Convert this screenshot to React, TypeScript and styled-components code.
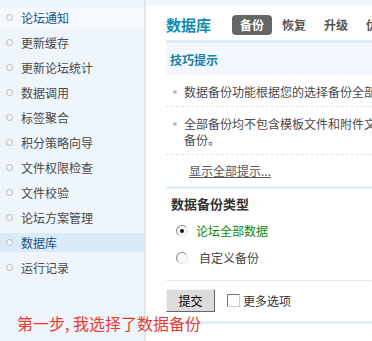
import React from "react";
import styled, { createGlobalStyle } from "styled-components";

const GlobalStyle = createGlobalStyle`
  html, body {
    margin: 0;
    padding: 0;
    background: #ffffff;
  }
  body {
    font-family: "Noto Sans CJK SC", "Noto Sans", sans-serif;
    font-size: 12px;
    color: #333;
  }
  ul {
    list-style: none;
    margin: 0;
    padding: 0;
  }
`;

const menu = [
  "论坛通知",
  "更新缓存",
  "更新论坛统计",
  "数据调用",
  "标签聚合",
  "积分策略向导",
  "文件权限检查",
  "文件校验",
  "论坛方案管理",
  "数据库",
  "运行记录",
];

const tabs = ["备份", "恢复", "升级", "优化"];

export default function App() {
  return (
    <>
      <GlobalStyle />
      <Page>
        <Sidebar>
          {menu.map((item, i) => (
            <MenuItem key={item} $active={i === 9} $soft={i === 0}>
              <Bullet />
              <MenuText $blue={i === 0 || i === 9}>{item}</MenuText>
            </MenuItem>
          ))}
        </Sidebar>

        <Main>
          <TitleRow>
            <Title>数据库</Title>
            <Tabs>
              {tabs.map((t, i) => (
                <Tab key={t} $current={i === 0}>
                  {t}
                </Tab>
              ))}
            </Tabs>
          </TitleRow>

          <TipsBox>
            <TipsHeader>技巧提示</TipsHeader>
            <TipList>
              <TipItem>
                <Dot />
                <TipText>
                  数据备份功能根据您的选择备份全部Discuz!论坛帖子和设置数据，导出的数据文件可用“数据恢复”功能或
                  phpMyAdmin 导入。
                </TipText>
              </TipItem>
              <TipItem>
                <Dot />
                <TipText>
                  全部备份均不包含模板文件和附件文件。模板、附件的备份只需通过 FTP 等下载 templates/、attachments/
                  目录即可，Discuz! 不提供单独
                  <br />
                  备份。
                </TipText>
              </TipItem>
              <MoreTips>
                <MoreLink href="#">显示全部提示...</MoreLink>
              </MoreTips>
            </TipList>
          </TipsBox>

          <Section>
            <SectionTitle>数据备份类型</SectionTitle>
            <RadioRow>
              <Radio $checked />
              <RadioLabel $green>论坛全部数据</RadioLabel>
            </RadioRow>
            <RadioRow>
              <Radio />
              <RadioLabel>自定义备份</RadioLabel>
            </RadioRow>
          </Section>

          <SubmitRow>
            <SubmitButton>提交</SubmitButton>
            <CheckLabel>
              <CheckBox />
              更多选项
            </CheckLabel>
          </SubmitRow>

          <NextBar />
        </Main>

        <Note>第一步, 我选择了数据备份</Note>
      </Page>
    </>
  );
}

const Page = styled.div`
  position: relative;
  display: flex;
  width: 372px;
  height: 341px;
  overflow: hidden;
`;

const Sidebar = styled.ul`
  flex: 0 0 146px;
  display: flex;
  flex-direction: column;
  gap: 6px;
  padding-top: 8px !important;
  background-color: #eef5fb;
  border-right: 2px solid #dde9f3;
  box-sizing: border-box;
`;

const MenuItem = styled.li<{ $active?: boolean; $soft?: boolean }>`
  display: flex;
  align-items: center;
  gap: 8px;
  height: 19px;
  padding-left: 6px;
  background-color: ${(p) => (p.$active ? "#dbeaf7" : p.$soft ? "#f4f9fd" : "transparent")};
`;

const Bullet = styled.span`
  width: 5px;
  height: 5px;
  border: 1px solid #b4b9be;
  border-radius: 50%;
  background: #f4f7fa;
`;

const MenuText = styled.span<{ $blue?: boolean }>`
  font-size: 12px;
  color: ${(p) => (p.$blue ? "#1c5283" : "#4a4a4a")};
  white-space: nowrap;
`;

const Main = styled.div`
  flex: 0 0 560px;
  padding-left: 20px;
  border-top: 5px solid #f4f7fa;
  box-sizing: border-box;
`;

const TitleRow = styled.div`
  display: flex;
  align-items: center;
  height: 20px;
  margin-top: 10px;
`;

const Title = styled.h1`
  margin: 0 21px 0 0;
  font-size: 15px;
  font-weight: 700;
  color: #118bb6;
  line-height: 20px;
`;

const Tabs = styled.div`
  display: flex;
  gap: 2px;
`;

const Tab = styled.span<{ $current?: boolean }>`
  width: 40px;
  height: 20px;
  line-height: 20px;
  text-align: center;
  font-weight: 700;
  font-size: 12px;
  border-radius: 4px;
  color: ${(p) => (p.$current ? "#ffffff" : "#555555")};
  background-color: ${(p) => (p.$current ? "#666666" : "transparent")};
`;

const TipsBox = styled.div`
  margin-top: 5px;
`;

const TipsHeader = styled.div`
  height: 32px;
  line-height: 34px;
  padding-left: 4px;
  border-top: 3px solid #e2eef9;
  background-color: #f2f8fd;
  font-weight: 700;
  font-size: 12px;
  color: #1a7fab;
`;

const TipList = styled.ul`
  border-bottom: 3px solid #e2eef9;
`;

const TipItem = styled.li`
  display: flex;
  align-items: flex-start;
  padding: 9px 0 6px 5px;
  border-bottom: 1px dashed #e2e2e2;
`;

const Dot = styled.span`
  flex: 0 0 4px;
  height: 4px;
  margin: 6px 7px 0 2px;
  border-radius: 50%;
  background-color: #b8bcc0;
`;

const TipText = styled.span`
  line-height: 16px;
  white-space: nowrap;
  color: #4a4a4a;
`;

const MoreTips = styled.li`
  padding: 8px 0 7px 23px;
  line-height: 16px;
`;

const MoreLink = styled.a`
  color: #555;
  text-decoration: underline;
`;

const Section = styled.div`
  padding: 8px 0 9px 5px;
  border-bottom: 1px dotted #d4d4d4;
`;

const SectionTitle = styled.div`
  font-size: 13px;
  font-weight: 700;
  color: #333;
  line-height: 14px;
  margin-bottom: 6px;
`;

const RadioRow = styled.div`
  display: flex;
  align-items: center;
  height: 27px;
  padding-left: 5px;
`;

const Radio = styled.span<{ $checked?: boolean }>`
  position: relative;
  width: 10px;
  height: 10px;
  border-radius: 50%;
  border: 1px solid;
  border-color: #8a8a8a #e0e0e0 #e8e8e8 #8a8a8a;
  background: #fafafa;
  margin-right: 8px;

  &::after {
    content: "";
    display: ${(p) => (p.$checked ? "block" : "none")};
    position: absolute;
    left: 3px;
    top: 3px;
    width: 4px;
    height: 4px;
    border-radius: 50%;
    background: #111;
  }
`;

const RadioLabel = styled.span<{ $green?: boolean }>`
  font-size: 12px;
  color: ${(p) => (p.$green ? "#0a8a0a" : "#444")};
  margin-left: ${(p) => (p.$green ? "0" : "3px")};
`;

const SubmitRow = styled.div`
  display: flex;
  align-items: center;
  gap: 12px;
  margin-top: 8px;
`;

const SubmitButton = styled.button`
  width: 49px;
  height: 23px;
  padding: 0;
  font-family: "Noto Sans CJK SC", sans-serif;
  font-size: 12px;
  color: #000;
  background-color: #dcdcdc;
  border: 1px solid;
  border-color: #f4f4f4 #666 #666 #f4f4f4;
`;

const CheckLabel = styled.label`
  display: flex;
  align-items: center;
  gap: 3px;
  font-size: 12px;
  color: #333;
`;

const CheckBox = styled.span`
  width: 11px;
  height: 11px;
  border: 1px solid;
  border-color: #777 #ccc #ccc #777;
  background: #fff;
`;

const NextBar = styled.div`
  height: 3px;
  margin-top: 9px;
  background-color: #e2eef9;
`;

const Note = styled.div`
  position: absolute;
  left: 17px;
  top: 314px;
  font-size: 16px;
  line-height: 18px;
  color: #ec3a30;
  white-space: nowrap;
`;
